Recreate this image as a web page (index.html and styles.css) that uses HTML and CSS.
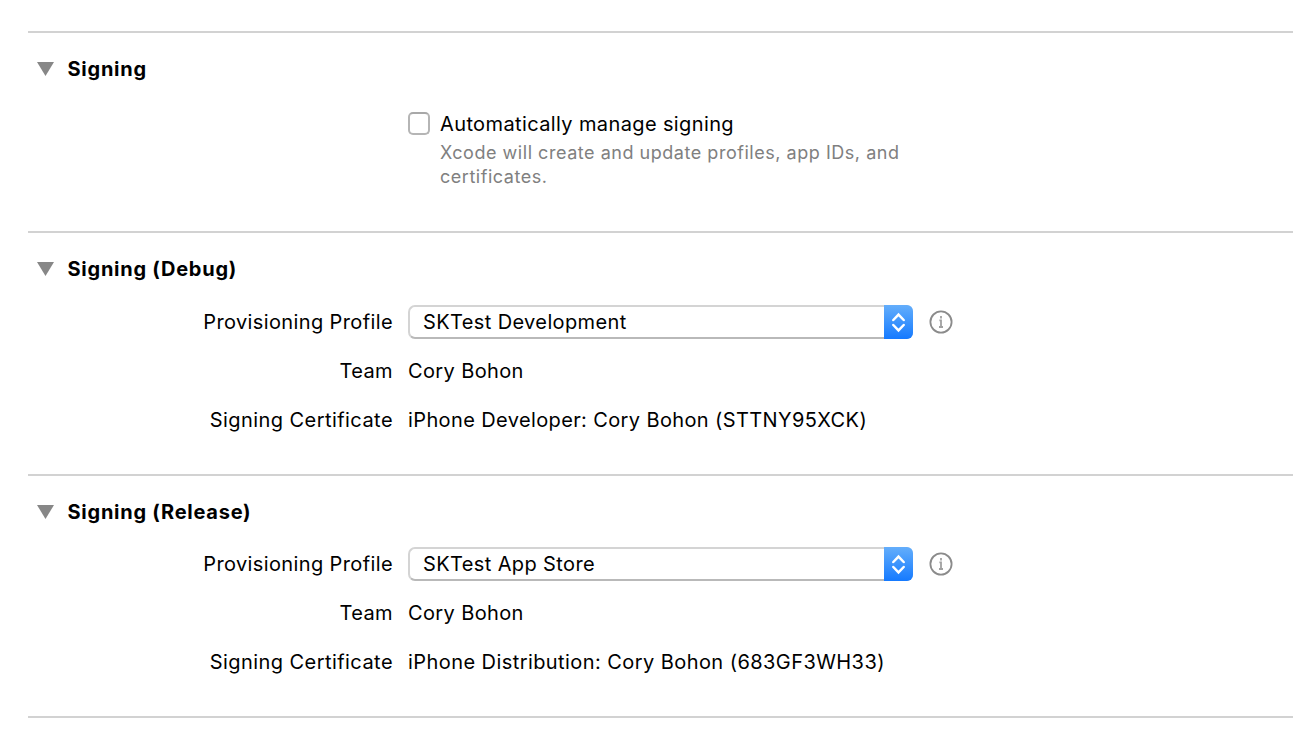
FILE: index.html
```html
<!DOCTYPE html>
<html lang="en">
<head>
<meta charset="utf-8">
<title>Signing</title>
<link rel="stylesheet" href="styles.css">
</head>
<body>
<main class="editor">
  <section class="section section-auto">
    <h2 class="heading"><svg class="disclosure" viewBox="0 0 17 14"><path d="M0 0H17L8.5 14Z"/></svg><span class="title">Signing</span></h2>
    <div class="auto">
      <span class="checkbox"></span>
      <div class="auto-text">
        <label class="auto-label">Automatically manage signing</label>
        <p class="hint">Xcode will create and update profiles, app IDs, and<br>certificates.</p>
      </div>
    </div>
  </section>
  <section class="section section-debug">
    <h2 class="heading"><svg class="disclosure" viewBox="0 0 17 14"><path d="M0 0H17L8.5 14Z"/></svg><span class="title">Signing (Debug)</span></h2>
    <div class="rows">
      <span class="label">Provisioning Profile</span>
      <div class="control">
        <div class="popup"><span class="popup-text">SKTest Development</span><span class="stepper"><svg viewBox="0 0 29 34"><path d="M9.3 15L14.5 9.6L19.7 15M9.3 20L14.5 25.4L19.7 20"/></svg></span></div>
        <svg class="info" viewBox="0 0 24 24"><circle cx="12" cy="12" r="10.6"/><path class="info-mark" d="M10.4 10.4H12V17M10 17H14M12 6V8.4"/></svg>
      </div>
      <span class="label">Team</span><span class="value">Cory Bohon</span>
      <span class="label certificate">Signing Certificate</span><span class="value">iPhone Developer: Cory Bohon (STTNY95XCK)</span>
    </div>
  </section>
  <section class="section section-release">
    <h2 class="heading"><svg class="disclosure" viewBox="0 0 17 14"><path d="M0 0H17L8.5 14Z"/></svg><span class="title">Signing (Release)</span></h2>
    <div class="rows">
      <span class="label">Provisioning Profile</span>
      <div class="control">
        <div class="popup"><span class="popup-text">SKTest App Store</span><span class="stepper"><svg viewBox="0 0 29 34"><path d="M9.3 15L14.5 9.6L19.7 15M9.3 20L14.5 25.4L19.7 20"/></svg></span></div>
        <svg class="info" viewBox="0 0 24 24"><circle cx="12" cy="12" r="10.6"/><path class="info-mark" d="M10.4 10.4H12V17M10 17H14M12 6V8.4"/></svg>
      </div>
      <span class="label">Team</span><span class="value">Cory Bohon</span>
      <span class="label certificate">Signing Certificate</span><span class="value distribution">iPhone Distribution: Cory Bohon (683GF3WH33)</span>
    </div>
  </section>
</main>
</body>
</html>
```
FILE: styles.css
```css
* { box-sizing: border-box; }
body {
  margin: 0;
  background: #fff;
  color: #000;
  font: 20px/24px Inter, "Liberation Sans", sans-serif;
  letter-spacing: 0.38px;
}
.editor {
  width: 1265px;
  height: 687px;
  margin: 31px 0 0 28px;
  border-bottom: 2px solid #d2d2d2;
}
.section { border-top: 2px solid #d2d2d2; }
.section-auto { height: 200px; }
.section-debug { height: 243px; }
.heading {
  display: flex;
  align-items: center;
  margin: 0;
  padding: 24px 0 0 9px;
  font-size: 20px;
  line-height: 24px;
  font-weight: 700;
  letter-spacing: 0.75px;
}
.disclosure { width: 17px; height: 14px; margin-right: 13.5px; fill: #878787; }
.auto { display: flex; gap: 10px; padding: 29px 0 0 380px; }
.checkbox {
  width: 22px;
  height: 23px;
  margin-top: 2px;
  border: 2px solid #b5b5b5;
  border-top-color: #a8a8a8;
  border-radius: 5px;
}
.auto-label { display: block; line-height: 26px; padding-top: 1px; }
.hint {
  margin: 4px 0 0;
  font-size: 18px;
  line-height: 24px;
  letter-spacing: 0.53px;
  color: #808080;
}
.rows {
  display: grid;
  grid-template-columns: 365px 1fr;
  grid-auto-rows: 34px;
  gap: 15px;
  padding-top: 23px;
  align-items: center;
}
.section-debug .rows { padding-top: 24px; }
.label { text-align: right; }
.certificate { letter-spacing: 0.44px; }
.distribution { letter-spacing: 0.43px; }
.control { display: flex; align-items: center; gap: 16px; }
.popup {
  display: flex;
  justify-content: space-between;
  align-items: center;
  width: 505px;
  height: 34px;
  padding-left: 13px;
  border: 2px solid #d4d4d4;
  border-bottom-color: #b9b9b9;
  border-right: 0;
  border-radius: 7px;
}
.stepper {
  width: 29px;
  height: 34px;
  border-radius: 0 6px 6px 0;
  background: linear-gradient(#64aefb, #157aff);
}
.stepper svg { display: block; width: 29px; height: 34px; fill: none; stroke: #fff; stroke-width: 2.5; stroke-linecap: round; }
.info { width: 24px; height: 24px; fill: none; stroke: #8b8b8b; stroke-width: 1.8; }
.info-mark { stroke: #a0a0a0; }
```
